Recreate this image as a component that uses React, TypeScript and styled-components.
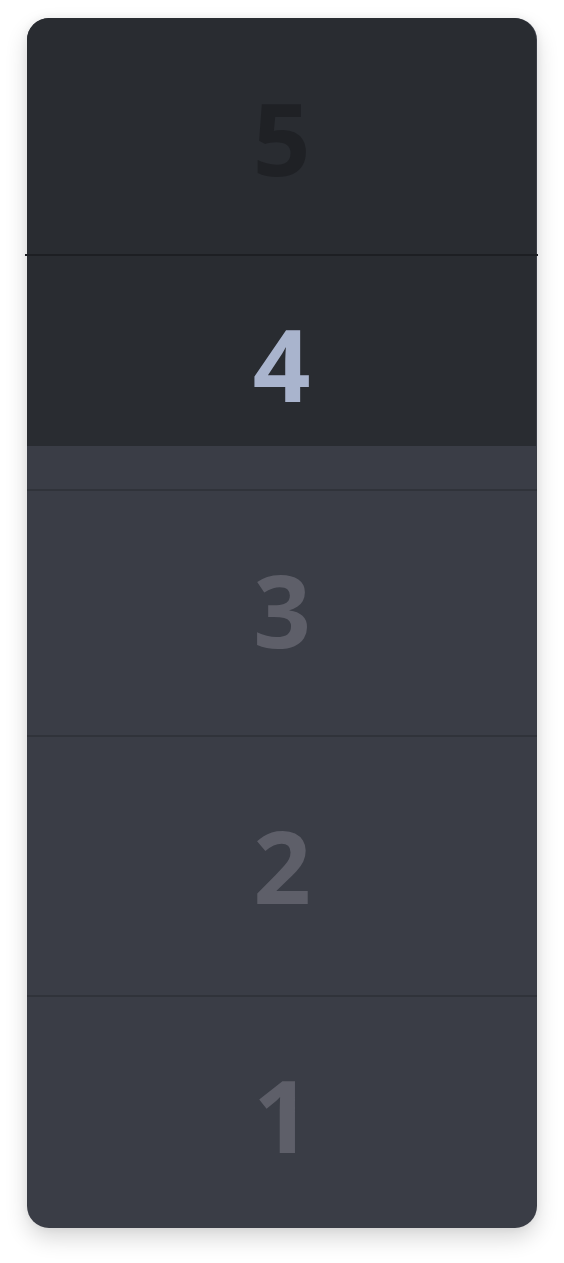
import React from "react";
import styled, { createGlobalStyle } from "styled-components";

const Global = createGlobalStyle`
  html, body { margin: 0; padding: 0; background: #ffffff; }
  body { font-family: "Open Sans", "Noto Sans", sans-serif; }
`;

const Page = styled.div`
  padding: 18px 27px 35px 27px;
  width: 510px;
`;

const Card = styled.div`
  width: 510px;
  height: 1210px;
  display: flex;
  flex-direction: column;
  background: #3a3d46;
  border-radius: 22px;
  box-shadow: 0 10px 22px rgba(0, 0, 0, 0.16), 0 0 8px rgba(0, 0, 0, 0.06);
`;

const DarkZone = styled.div`
  display: flex;
  flex-direction: column;
  background: #292c31;
  border-radius: 22px 22px 0 0;
  margin-right: 1px;
`;

const Row = styled.div<{ $h: number; $pad: number }>`
  height: ${(p) => p.$h}px;
  box-sizing: border-box;
  padding-top: ${(p) => p.$pad}px;
  display: flex;
  justify-content: center;
  align-items: flex-start;
  flex-shrink: 0;
`;

const Digit = styled.span<{ $tone: "shadow" | "active" | "idle" }>`
  font-family: "Open Sans", "Noto Sans", sans-serif;
  font-weight: 700;
  font-size: 101px;
  line-height: 1;
  color: ${(p) =>
    p.$tone === "active" ? "#a9b4cd" : p.$tone === "shadow" ? "#1f2125" : "#5e5f69"};
`;

const Divider = styled.div<{ $wide?: boolean }>`
  height: 2px;
  flex-shrink: 0;
  background: ${(p) => (p.$wide ? "#1d1f23" : "#30333a")};
  margin: ${(p) => (p.$wide ? "0 -2px 0 -2px" : "0")};
`;

const Strip = styled.div`
  height: 43px;
  flex-shrink: 0;
`;

export default function App() {
  return (
    <>
      <Global />
      <Page>
        <Card>
          <DarkZone>
            <Row $h={236} $pad={69}>
              <Digit $tone="shadow">5</Digit>
            </Row>
            <Divider $wide />
            <Row $h={190} $pad={57}>
              <Digit $tone="active">4</Digit>
            </Row>
          </DarkZone>
          <Strip />
          <Divider />
          <Row $h={244} $pad={68}>
            <Digit $tone="idle">3</Digit>
          </Row>
          <Divider />
          <Row $h={258} $pad={78}>
            <Digit $tone="idle">2</Digit>
          </Row>
          <Divider />
          <Row $h={231} $pad={67}>
            <Digit $tone="idle">1</Digit>
          </Row>
        </Card>
      </Page>
    </>
  );
}
